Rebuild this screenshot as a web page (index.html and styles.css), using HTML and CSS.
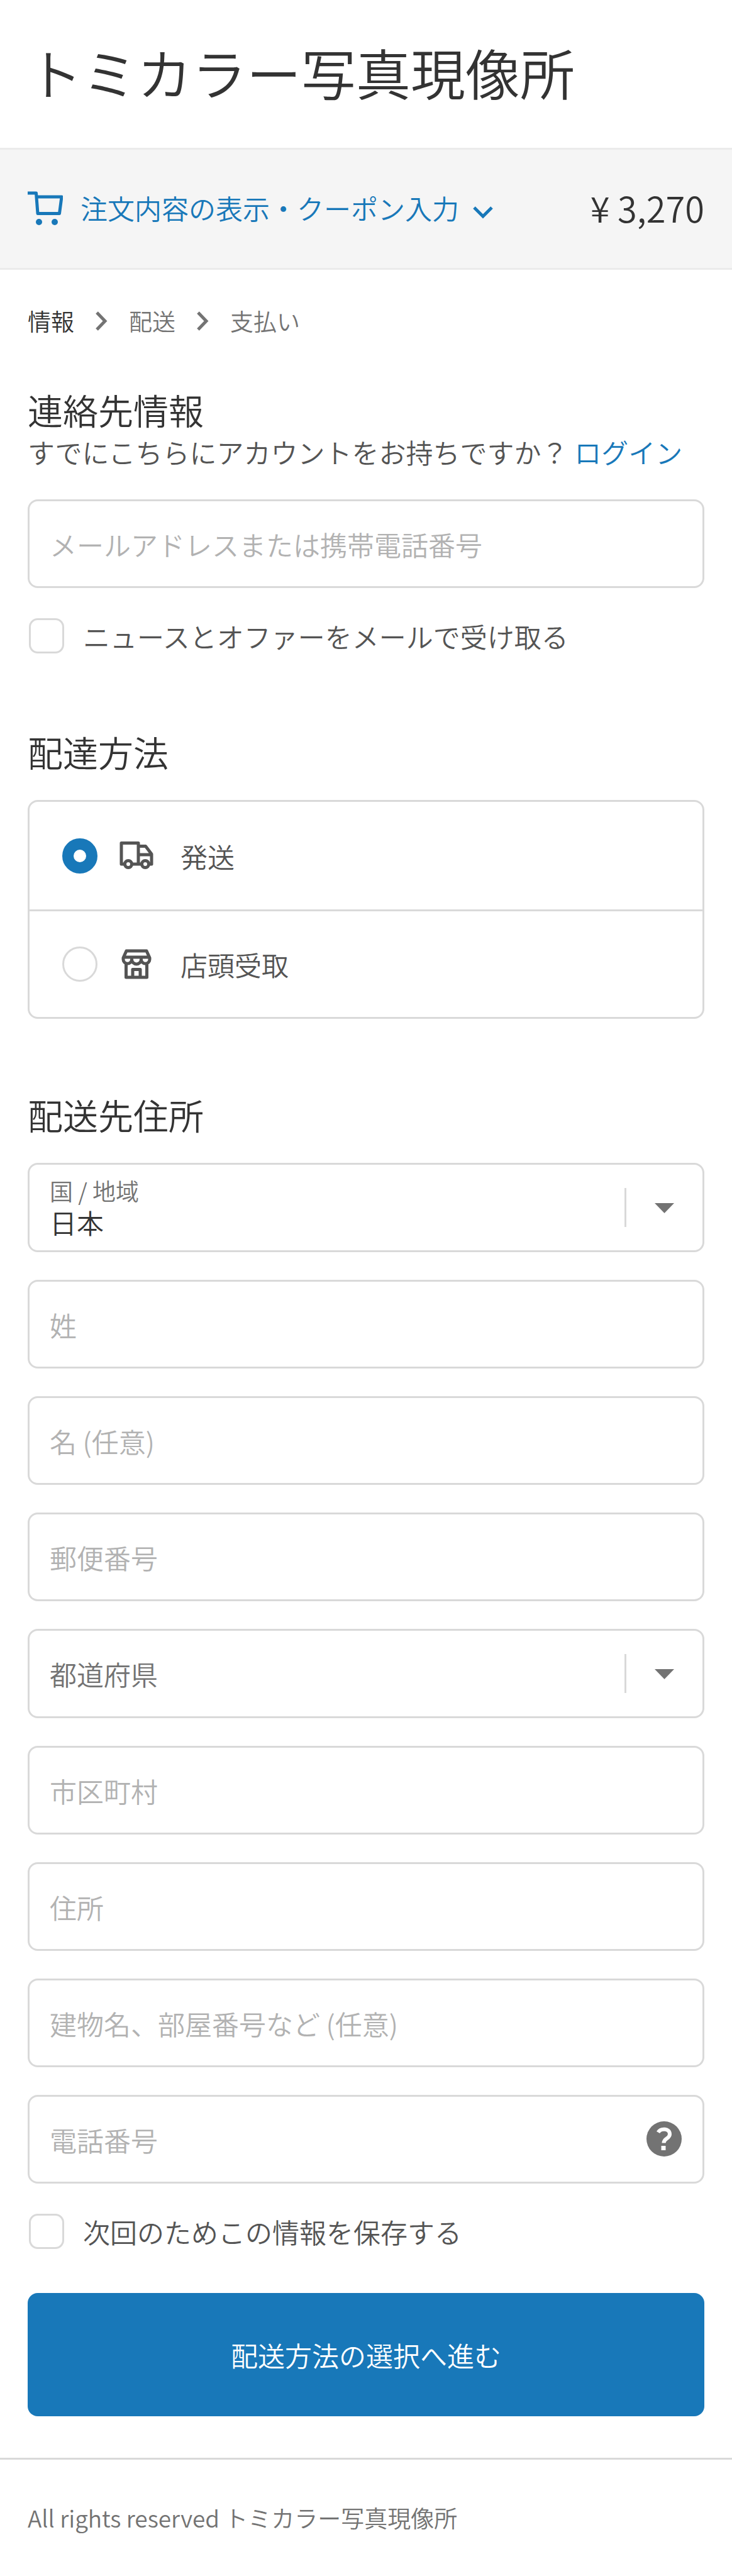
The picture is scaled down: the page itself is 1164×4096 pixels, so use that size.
FILE: index.html
```html
<!DOCTYPE html>
<html lang="ja">
<head>
<meta charset="utf-8">
<meta name="viewport" content="width=device-width, initial-scale=1">
<title>トミカラー写真現像所 - 情報</title>
<link rel="stylesheet" href="styles.css">
</head>
<body>
<header class="site-header">
  <h1 class="site-title">トミカラー写真現像所</h1>
</header>

<aside class="summary">
  <button type="button" class="summary-toggle">
    <svg class="icon-cart" viewBox="0 0 56 56" aria-hidden="true">
      <path d="M0 3h13.500L16 35.500h34.500L54 9H15" fill="none" stroke="currentColor" stroke-width="5" stroke-linejoin="round"/>
      <circle cx="18" cy="49" r="5"/><circle cx="43" cy="49" r="5"/>
    </svg>
    <span class="summary-text">注文内容の表示・クーポン入力</span>
    <svg class="icon-down" viewBox="0 0 32 20" aria-hidden="true"><path d="M2 2l14 14L30 2" fill="none" stroke="currentColor" stroke-width="5"/></svg>
  </button>
  <span class="summary-price">¥ 3,270</span>
</aside>

<main class="content">
  <nav aria-label="手順">
    <ol class="steps">
      <li class="step step-current" aria-current="step">情報</li>
      <li class="step">
        <svg class="icon-next" viewBox="0 0 19 31" aria-hidden="true"><path d="M2 2l13 13.500L2 29" fill="none" stroke="currentColor" stroke-width="5"/></svg>
        配送
      </li>
      <li class="step">
        <svg class="icon-next" viewBox="0 0 19 31" aria-hidden="true"><path d="M2 2l13 13.500L2 29" fill="none" stroke="currentColor" stroke-width="5"/></svg>
        支払い
      </li>
    </ol>
  </nav>

  <form class="form">
    <section class="section">
      <div>
        <h2 class="section-title">連絡先情報</h2>
        <p class="login">すでにこちらにアカウントをお持ちですか？ <a class="link" href="#login">ログイン</a></p>
      </div>
      <div class="fields">
        <input class="input" type="text" placeholder="メールアドレスまたは携帯電話番号" aria-label="メールアドレスまたは携帯電話番号">
        <label class="check"><input class="checkbox" type="checkbox"><span class="check-text">ニュースとオファーをメールで受け取る</span></label>
      </div>
    </section>

    <section class="section">
      <h2 class="section-title">配達方法</h2>
      <div class="options">
        <label class="option">
          <input class="radio" type="radio" name="delivery" checked>
          <svg class="icon-option" viewBox="0 0 56 56" aria-hidden="true">
            <g fill="none" stroke="currentColor" stroke-width="5" stroke-linejoin="round">
              <path d="M8 41H4V7.500h27V41M22 41h15M31 12.500h11.500L52 25v16h-4M31 26h21"/>
              <circle cx="15" cy="41" r="5.500"/><circle cx="42" cy="41" r="5.500"/>
            </g>
          </svg>
          <span>発送</span>
        </label>
        <label class="option">
          <input class="radio" type="radio" name="delivery">
          <svg class="icon-option" viewBox="0 0 56 56" aria-hidden="true">
            <g fill="none" stroke="currentColor" stroke-width="5" stroke-linejoin="round">
              <path d="M12 7h32l5 11v2.500a6.500 6.500 0 0 1-13.500 0a6.500 6.500 0 0 1-15 0a6.500 6.500 0 0 1-13.500 0V18zM7 17h42"/>
              <path d="M11.500 25v24h33V25M22 49V36.500h12V49"/>
            </g>
          </svg>
          <span>店頭受取</span>
        </label>
      </div>
    </section>

    <section class="section">
      <h2 class="section-title">配送先住所</h2>
      <div class="fields">
        <div class="select-field">
          <label class="select-label" for="country">国 / 地域</label>
          <select class="select select-labelled" id="country"><option>日本</option></select>
          <svg class="select-arrow" viewBox="0 0 79 62" aria-hidden="true"><path d="M0 0h3v62H0z" fill="#d9d9d9"/><path d="M48 24h31L63.500 40z" fill="#737373"/></svg>
        </div>
        <input class="input" type="text" placeholder="姓" aria-label="姓">
        <input class="input" type="text" placeholder="名 (任意)" aria-label="名 (任意)">
        <input class="input" type="text" placeholder="郵便番号" aria-label="郵便番号">
        <div class="select-field">
          <select class="select select-empty" aria-label="都道府県"><option>都道府県</option></select>
          <svg class="select-arrow" viewBox="0 0 79 62" aria-hidden="true"><path d="M0 0h3v62H0z" fill="#d9d9d9"/><path d="M48 24h31L63.500 40z" fill="#737373"/></svg>
        </div>
        <input class="input" type="text" placeholder="市区町村" aria-label="市区町村">
        <input class="input" type="text" placeholder="住所" aria-label="住所">
        <input class="input" type="text" placeholder="建物名、部屋番号など (任意)" aria-label="建物名、部屋番号など (任意)">
        <div class="phone-field">
          <input class="input" type="tel" placeholder="電話番号" aria-label="電話番号">
          <button type="button" class="help" aria-label="ヘルプ">
            <svg class="icon-help" viewBox="0 0 56 56" aria-hidden="true">
              <circle cx="28" cy="28" r="28" fill="#737373"/>
              <path d="M18.500 17.500C23 10.500 37 11 37 20.500C37 28 27.500 26.500 27.500 34.500" fill="none" stroke="#fff" stroke-width="6"/>
              <path d="M23.500 39h7v7h-7z" fill="#fff"/>
            </svg>
          </button>
        </div>
        <label class="check"><input class="checkbox" type="checkbox"><span class="check-text">次回のためこの情報を保存する</span></label>
      </div>
    </section>

    <button type="submit" class="submit">配送方法の選択へ進む</button>
  </form>
</main>

<footer class="site-footer">All rights reserved トミカラー写真現像所</footer>
</body>
</html>
```
FILE: styles.css
```css
*, *::before, *::after { box-sizing: border-box; }

body {
  margin: 0;
  background: #fff;
  color: #545454;
  font-family: "Noto Sans CJK JP", "Noto Sans", sans-serif;
  font-size: 43px;
  font-weight: 350;
  line-height: 64px;
}

h1, h2, p, ol { margin: 0; padding: 0; font-weight: inherit; }
svg { display: block; flex: none; }
input, select, button { font: inherit; margin: 0; }
button { border: 0; padding: 0; cursor: pointer; }

.site-header { padding: 48px 44px 55px; }
.site-title { color: #333; font-size: 87px; line-height: 132px; }

.summary {
  display: flex;
  align-items: center;
  justify-content: space-between;
  height: 194px;
  padding: 0 44px 4px;
  background: #f5f5f5;
  border: solid #ebebeb;
  border-width: 3px 0;
}
.summary-toggle { display: flex; align-items: center; background: none; color: #1878b9; }
.summary-text { margin: 0 22px 0 28px; }
.icon-cart { width: 56px; height: 56px; margin-top: 4px; fill: currentColor; }
.icon-down { width: 32px; height: 20px; margin-top: 16px; }
.summary-price { color: #333; font-size: 56px; }

.content { padding: 49px 44px 66px; }
.steps { display: flex; gap: 34px; list-style: none; font-size: 37px; }
.step { display: flex; align-items: center; gap: 34px; color: #737373; }
.step-current { color: #333; }
.icon-next { width: 19px; height: 31px; }

.form { padding-top: 79px; }
.section { display: grid; gap: 43px; margin-bottom: 122px; }
.section:last-of-type { margin-bottom: 66px; }
.section-title { padding-bottom: 4px; color: #333; font-size: 56px; line-height: 60px; }
.login { line-height: 66px; }
.link { color: #1878b9; text-decoration: none; }

.fields { display: grid; gap: 44px; }
.input {
  display: block;
  width: 100%;
  height: 141px;
  padding: 0 32px;
  border: 3px solid #d9d9d9;
  border-radius: 16px;
  background: #fff;
  color: #333;
}
.input::placeholder { color: #b2b2b2; opacity: 1; }

.check { display: flex; align-items: center; gap: 30px; padding-left: 2px; }
.checkbox {
  appearance: none;
  flex: none;
  width: 56px;
  height: 56px;
  border: 3px solid #d9d9d9;
  border-radius: 14px;
  background: #fff;
}
.checkbox:checked { background: #1878b9; }

.options { border: 3px solid #d9d9d9; border-radius: 16px; }
.option { display: flex; align-items: center; height: 171px; padding: 0 52px; }
.option + .option { border-top: 3px solid #d9d9d9; }
.radio {
  appearance: none;
  width: 56px;
  height: 56px;
  border: 3px solid #d9d9d9;
  border-radius: 50%;
  background: #fff;
}
.radio:checked { border: 18px solid #1878b9; }
.icon-option { width: 56px; height: 56px; margin: 0 42px 0 34px; }

.select-field, .phone-field { position: relative; }
.select {
  display: block;
  appearance: none;
  width: 100%;
  height: 142px;
  padding: 0 120px 0 32px;
  border: 3px solid #d9d9d9;
  border-radius: 16px;
  background: #fff;
  color: #333;
}
.select-labelled { padding-top: 46px; }
.select-empty { color: #737373; }
.select-label {
  position: absolute;
  top: 22px;
  left: 35px;
  color: #737373;
  font-size: 37px;
  line-height: 44px;
}
.select-arrow {
  position: absolute;
  top: 40px;
  right: 48px;
  width: 79px;
  height: 62px;
  pointer-events: none;
}
.help { position: absolute; top: 42px; right: 36px; background: none; }
.icon-help { width: 56px; height: 56px; }

.submit {
  display: block;
  width: 100%;
  height: 196px;
  border-radius: 16px;
  background: #1878b9;
  color: #fff;
}

.site-footer {
  padding: 60px 44px 61px;
  border-top: 3px solid #d9d9d9;
  color: #737373;
  font-size: 37px;
}
```
